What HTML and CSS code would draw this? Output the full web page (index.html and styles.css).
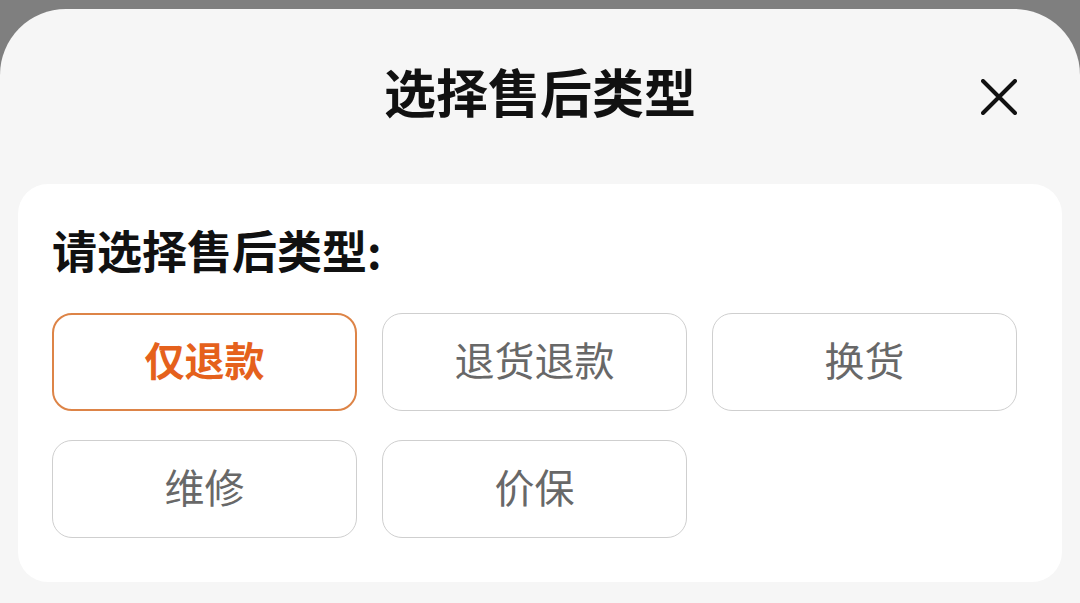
FILE: index.html
```html
<!DOCTYPE html>
<html lang="zh-CN">
<head>
<meta charset="utf-8">
<link rel="stylesheet" href="styles.css">
</head>
<body>
<div class="sheet">
  <div class="header">
    <span class="spacer"></span>
    <h1 class="title">选择售后类型</h1>
    <button class="close" aria-label="关闭">
      <svg width="36" height="36" viewBox="0 0 36 36"><path d="M2 2 L34 34 M34 2 L2 34" stroke="#111" stroke-width="4" stroke-linecap="round" fill="none"/></svg>
    </button>
  </div>
  <div class="card">
    <div class="label">请选择售后类型:</div>
    <div class="options">
      <div class="opt selected">仅退款</div>
      <div class="opt">退货退款</div>
      <div class="opt">换货</div>
      <div class="opt">维修</div>
      <div class="opt">价保</div>
    </div>
  </div>
</div>
</body>
</html>
```
FILE: styles.css
```css
html, body {
  margin: 0;
  padding: 0;
}
body {
  background: #7f7f7f;
  width: 1080px;
  height: 603px;
  overflow: hidden;
  font-family: "Noto Sans CJK SC", "Noto Sans", sans-serif;
}
.sheet {
  margin-top: 9px;
  height: 594px;
  background: #f6f6f6;
  border-radius: 66px 66px 0 0;
  display: flex;
  flex-direction: column;
}
.header {
  height: 175px;
  display: grid;
  grid-template-columns: 1fr auto 1fr;
  align-items: center;
  box-sizing: border-box;
}
.title {
  margin: -12px 0 0 0;
  font-size: 52px;
  font-weight: 700;
  color: #111;
  line-height: 1;
}
.close {
  justify-self: end;
  margin-right: 63px;
  background: none;
  border: none;
  padding: 0;
  width: 36px;
  height: 36px;
  display: flex;
  cursor: pointer;
}
.card {
  margin: 0 18px;
  background: #fff;
  border-radius: 30px;
  padding: 43px 34px 44px 34px;
  height: 398px;
  box-sizing: border-box;
}
.label {
  font-size: 45px;
  font-weight: 700;
  color: #111;
  line-height: 46px;
  margin-left: 0;
}
.options {
  margin-top: 40px;
  display: grid;
  grid-template-columns: repeat(3, 305px);
  column-gap: 25px;
  row-gap: 29px;
}
.opt {
  height: 98px;
  box-sizing: border-box;
  border: 1.5px solid #cfcfcf;
  border-radius: 20px;
  display: flex;
  align-items: center;
  justify-content: center;
  font-size: 40px;
  line-height: 1;
  padding-bottom: 6px;
  color: #686868;
  background: #fff;
}
.opt.selected {
  border: 2px solid #dd8447;
  color: #e5611c;
  font-weight: 700;
}
```
